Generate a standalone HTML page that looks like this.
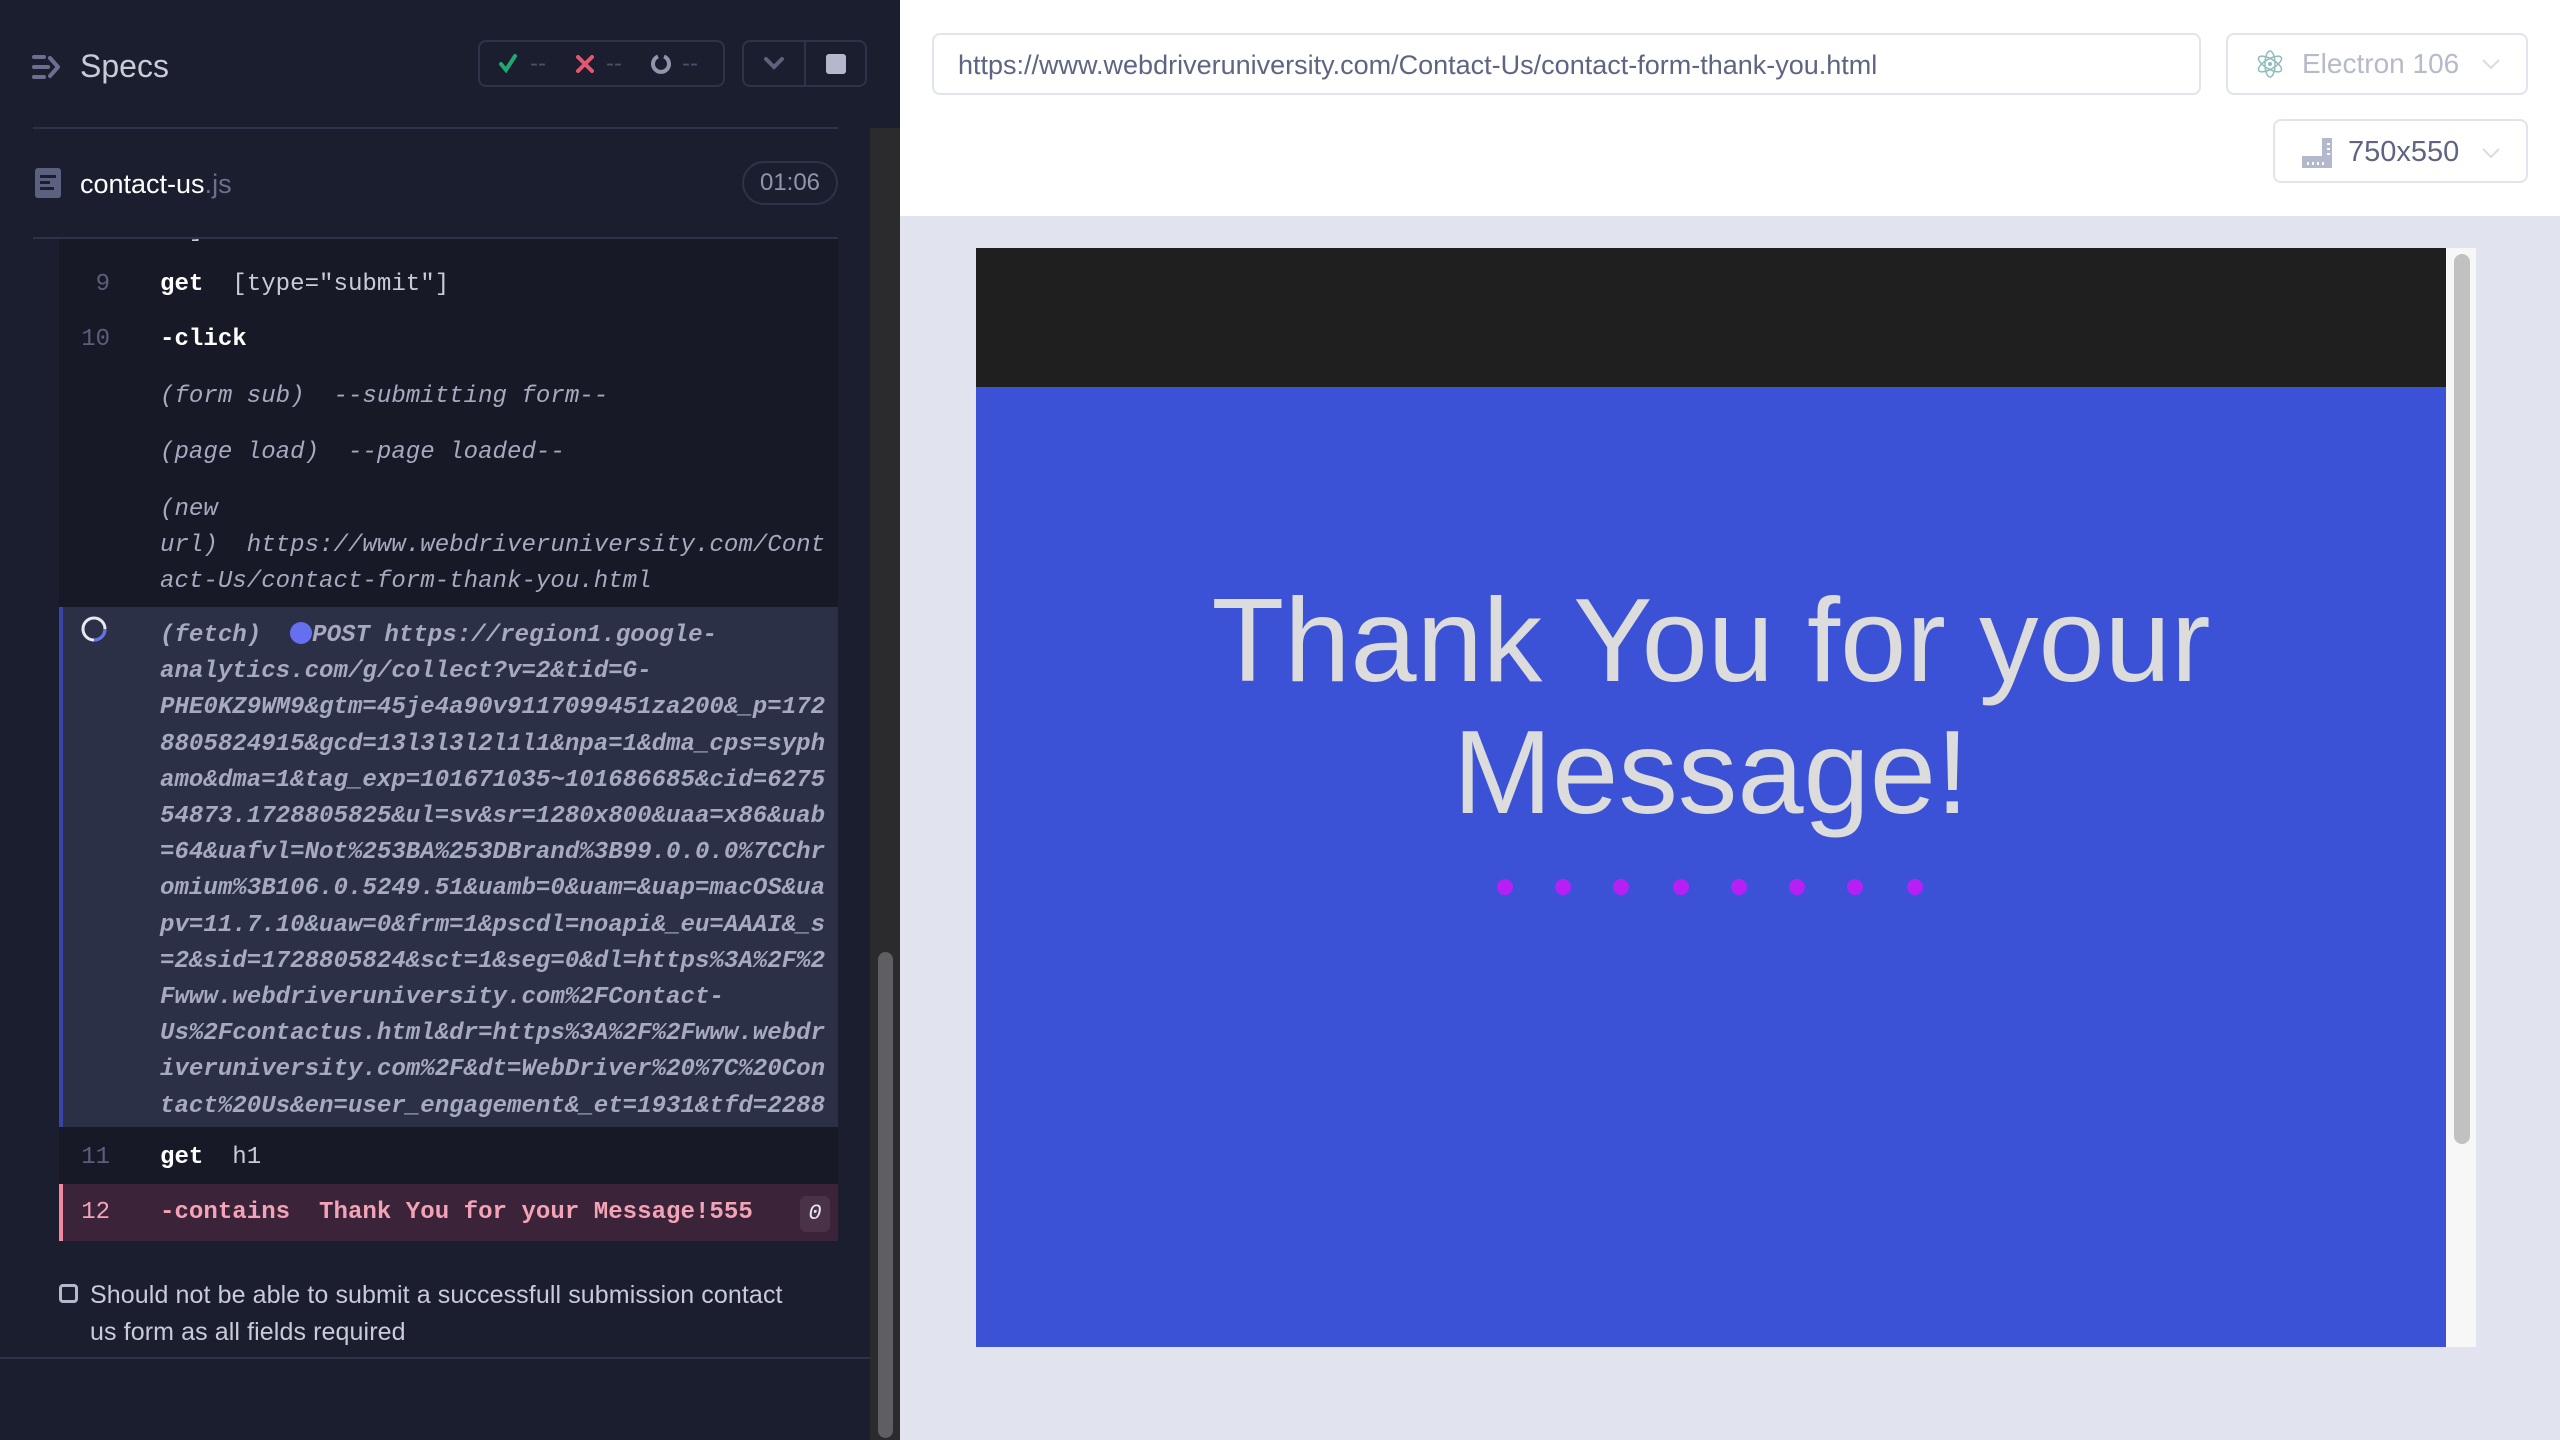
<!DOCTYPE html>
<html><head><meta charset="utf-8"><style>
*{margin:0;padding:0;box-sizing:border-box}
body{width:2560px;height:1440px;overflow:hidden;position:relative;background:#e1e4ee;font-family:"Liberation Sans",sans-serif}
.a{position:absolute}
#left{left:0;top:0;width:900px;height:1440px;background:#1b1e2e}
.mono{font-family:"Liberation Mono",monospace;font-size:24.1px;white-space:pre}
.ln{position:absolute;left:60px;width:50px;text-align:right;color:#5a5f7a;font-family:"Liberation Mono",monospace;font-size:24px}
.it{font-style:italic;color:#a6a9bf}
</style></head><body>
<div id="left" class="a">
  <svg class="a" style="left:32px;top:53px" width="30" height="28" viewBox="0 0 30 28"><g fill="#6b7090"><rect x="0" y="2" width="14" height="4" rx="2"/><rect x="0" y="12" width="18" height="4" rx="2"/><rect x="0" y="22" width="14" height="4" rx="2"/></g><path d="M18 5l8 9-8 9" stroke="#6b7090" stroke-width="4" fill="none" stroke-linecap="round" stroke-linejoin="round"/></svg>
  <div class="a" style="left:80px;top:48px;font-size:32px;color:#c9cbd9">Specs</div>
  <div class="a" style="left:478px;top:40px;width:247px;height:47px;border:2px solid #2f3349;border-radius:8px"></div>
  <svg class="a" style="left:498px;top:53px" width="20" height="20" viewBox="0 0 20 20"><path d="M3 11l5 6L17 3" stroke="#1fa971" stroke-width="4" fill="none" stroke-linecap="round"/></svg>
  <div class="a" style="left:530px;top:50px;color:#4b4f69;font-size:24px">--</div>
  <svg class="a" style="left:576px;top:55px" width="18" height="18" viewBox="0 0 18 18"><path d="M2 2l14 14M16 2L2 16" stroke="#e45770" stroke-width="4" stroke-linecap="round"/></svg>
  <div class="a" style="left:606px;top:50px;color:#4b4f69;font-size:24px">--</div>
  <svg class="a" style="left:650px;top:53px" width="22" height="22" viewBox="0 0 22 22"><path d="M8 3.5A8 8 0 1 0 14 3.5" stroke="#9095ad" stroke-width="4" fill="none"/></svg>
  <div class="a" style="left:682px;top:50px;color:#4b4f69;font-size:24px">--</div>
  <div class="a" style="left:742px;top:40px;width:125px;height:47px;border:2px solid #2f3349;border-radius:8px"></div>
  <div class="a" style="left:804px;top:40px;width:2px;height:47px;background:#2f3349"></div>
  <svg class="a" style="left:763px;top:56px" width="22" height="14" viewBox="0 0 22 14"><path d="M3 3l8 8 8-8" stroke="#5d6280" stroke-width="4" fill="none" stroke-linecap="round"/></svg>
  <div class="a" style="left:826px;top:54px;width:20px;height:20px;background:#b4b8cc;border-radius:3px"></div>
  <div class="a" style="left:33px;top:127px;width:805px;height:2px;background:#2f3349"></div>
  <svg class="a" style="left:34px;top:167px" width="28" height="32" viewBox="0 0 28 32"><rect x="1" y="1" width="26" height="30" rx="3" fill="#5c6180"/><g fill="#1b1e2e"><rect x="6" y="8" width="16" height="3"/><rect x="6" y="14" width="10" height="3"/><rect x="6" y="20" width="14" height="3"/></g></svg>
  <div class="a" style="left:80px;top:169px;font-size:27px;color:#fff">contact-us<span style="color:#6b7090">.js</span></div>
  <div class="a" style="left:742px;top:161px;width:96px;height:44px;border:2px solid #2f3349;border-radius:22px;color:#9095ad;font-size:24px;text-align:center;line-height:40px">01:06</div>
  <div class="a" style="left:33px;top:237px;width:805px;height:2px;background:#2f3349"></div>
  <div class="a" style="left:59px;top:239px;width:779px;height:1002px;background:#171926;overflow:hidden">
    <div class="a mono" style="left:101px;top:-22px;color:#c9cbd9">."]</div>
  </div>
  <div class="ln" style="top:271px">9</div>
  <div class="a mono" style="left:160px;top:271px;color:#c9cbd9"><b style="color:#fff">get</b>  [type="submit"]</div>
  <div class="ln" style="top:326px">10</div>
  <div class="a mono" style="left:160px;top:326px;color:#fff"><b>-click</b></div>
  <div class="a mono it" style="left:160px;top:383px">(form sub)  --submitting form--</div>
  <div class="a mono it" style="left:160px;top:439px">(page load)  --page loaded--</div>
  <div class="a mono it" style="left:160px;top:492px;line-height:36px">(new
url)  https://www.webdriveruniversity.com/Cont
act-Us/contact-form-thank-you.html</div>
  <div class="a" style="left:59px;top:607px;width:779px;height:520px;background:#2c3046;border-left:4px solid #3a44a8"></div>
  <svg class="a" style="left:79px;top:614px" width="30" height="30" viewBox="0 0 30 30"><circle cx="15" cy="15" r="11" stroke="#e8e9f0" stroke-width="3" fill="none"/><path d="M26 15A11 11 0 0 1 15 26" stroke="#6470f0" stroke-width="3" fill="none"/></svg>
  <div class="a mono it" style="left:160px;top:618px;line-height:36.2px;font-weight:bold;color:#a6a9bf">(fetch)  <span style="display:inline-block;width:22px;height:22px;border-radius:50%;background:#6470f0;vertical-align:-3px"></span>POST https://region1.google-
analytics.com/g/collect?v=2&amp;tid=G-
PHE0KZ9WM9&amp;gtm=45je4a90v9117099451za200&amp;_p=172
8805824915&amp;gcd=13l3l3l2l1l1&amp;npa=1&amp;dma_cps=syph
amo&amp;dma=1&amp;tag_exp=101671035~101686685&amp;cid=6275
54873.1728805825&amp;ul=sv&amp;sr=1280x800&amp;uaa=x86&amp;uab
=64&amp;uafvl=Not%253BA%253DBrand%3B99.0.0.0%7CChr
omium%3B106.0.5249.51&amp;uamb=0&amp;uam=&amp;uap=macOS&amp;ua
pv=11.7.10&amp;uaw=0&amp;frm=1&amp;pscdl=noapi&amp;_eu=AAAI&amp;_s
=2&amp;sid=1728805824&amp;sct=1&amp;seg=0&amp;dl=https%3A%2F%2
Fwww.webdriveruniversity.com%2FContact-
Us%2Fcontactus.html&amp;dr=https%3A%2F%2Fwww.webdr
iveruniversity.com%2F&amp;dt=WebDriver%20%7C%20Con
tact%20Us&amp;en=user_engagement&amp;_et=1931&amp;tfd=2288</div>
  <div class="ln" style="top:1144px">11</div>
  <div class="a mono" style="left:160px;top:1144px;color:#c9cbd9"><b style="color:#fff">get</b>  h1</div>
  <div class="a" style="left:59px;top:1184px;width:779px;height:57px;background:#3b2339;border-left:4px solid #f0899e"></div>
  <div class="ln" style="top:1199px;color:#f3a3b5">12</div>
  <div class="a mono" style="left:160px;top:1199px;color:#f3a3b5;font-weight:bold">-contains  Thank You for your Message!555</div>
  <div class="a mono" style="left:800px;top:1196px;width:30px;height:36px;background:#4a3248;border-radius:6px;color:#e8e9f0;text-align:center;line-height:36px;font-size:22px;font-style:italic">0</div>
  <div class="a" style="left:59px;top:1284px;width:19px;height:19px;border:3px solid #b4b8cc;border-radius:4px"></div>
  <div class="a" style="left:90px;top:1277px;width:735px;font-size:25px;line-height:37px;color:#c9cbd9;letter-spacing:0.1px">Should not be able to submit a successfull submission contact<br>us form as all fields required</div>
  <div class="a" style="left:0;top:1357px;width:870px;height:2px;background:#2f3349"></div>
  <div class="a" style="left:870px;top:128px;width:30px;height:1312px;background:#2b2b2e"></div>
  <div class="a" style="left:878px;top:952px;width:15px;height:486px;background:#5f5f63;border-radius:8px"></div>
</div>
<div class="a" style="left:900px;top:0;width:1660px;height:216px;background:#fff"></div>
<div class="a" style="left:932px;top:33px;width:1269px;height:62px;border:2px solid #e1e4ee;border-radius:8px;color:#5d6582;font-size:27px;line-height:60px;padding-left:24px">https://www.webdriveruniversity.com/Contact-Us/contact-form-thank-you.html</div>
<div class="a" style="left:2226px;top:33px;width:302px;height:62px;border:2px solid #e1e4ee;border-radius:8px"></div>
<svg class="a" style="left:2255px;top:49px" width="30" height="30" viewBox="0 0 30 30"><g fill="none" stroke="#8fbcbd" stroke-width="1.5"><ellipse cx="15" cy="15" rx="13" ry="5" transform="rotate(30 15 15)"/><ellipse cx="15" cy="15" rx="13" ry="5" transform="rotate(-30 15 15)"/><ellipse cx="15" cy="15" rx="13" ry="5" transform="rotate(90 15 15)"/></g><circle cx="15" cy="15" r="2" fill="#8fbcbd"/></svg>
<div class="a" style="left:2302px;top:48px;font-size:28px;color:#b6bac9">Electron 106</div>
<svg class="a" style="left:2481px;top:58px" width="20" height="12" viewBox="0 0 20 12"><path d="M2 2l8 8 8-8" stroke="#d9dce6" stroke-width="2" fill="none"/></svg>
<div class="a" style="left:2273px;top:119px;width:255px;height:64px;border:2px solid #e1e4ee;border-radius:8px"></div>
<svg class="a" style="left:2300px;top:136px" width="34" height="34" viewBox="0 0 34 34"><path d="M22 2h10v30H2V20h20z" fill="#b4b8cc"/><g stroke="#fff" stroke-width="2"><path d="M8 26v3M13 26v3M18 26v3M23 26v3M27 8h3M27 13h3M27 18h3"/></g></svg>
<div class="a" style="left:2348px;top:136px;font-size:29px;color:#5d6582">750x550</div>
<svg class="a" style="left:2481px;top:147px" width="20" height="12" viewBox="0 0 20 12"><path d="M2 2l8 8 8-8" stroke="#d9dce6" stroke-width="2" fill="none"/></svg>
<div class="a" style="left:976px;top:248px;width:1470px;height:1099px;background:#3b52d6"></div>
<div class="a" style="left:976px;top:248px;width:1470px;height:139px;background:#1f1f1f"></div>
<div class="a" style="left:2446px;top:248px;width:30px;height:1099px;background:#f7f7f7"></div>
<div class="a" style="left:2454px;top:254px;width:16px;height:890px;background:#c1c1c1;border-radius:8px"></div>
<div class="a" style="left:976px;top:575px;width:1470px;text-align:center;font-size:119px;line-height:132px;color:#dcdcdc">Thank You for your<br>Message!</div>
<svg class="a" style="left:1490px;top:877px" width="440" height="20"><g fill="#b81ff5"><circle cx="15" cy="10" r="8"/><circle cx="73" cy="10" r="8"/><circle cx="131" cy="10" r="8"/><circle cx="191" cy="10" r="8"/><circle cx="249" cy="10" r="8"/><circle cx="307" cy="10" r="8"/><circle cx="365" cy="10" r="8"/><circle cx="425" cy="10" r="8"/></g></svg>
</body></html>
